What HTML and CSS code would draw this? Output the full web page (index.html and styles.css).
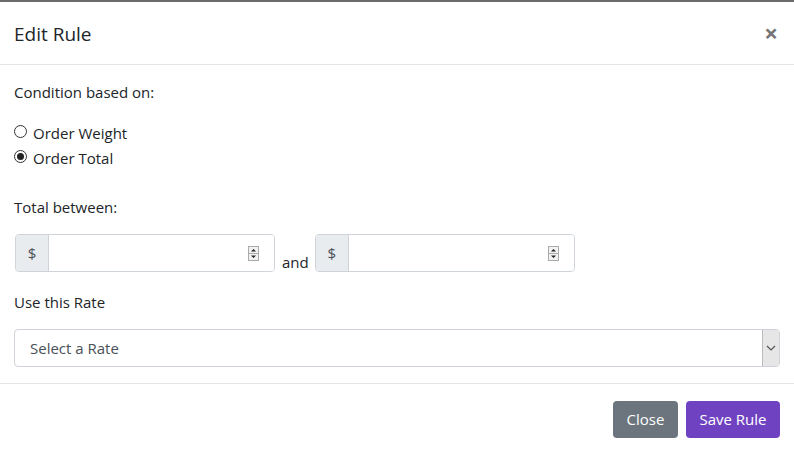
FILE: index.html
```html
<!DOCTYPE html>
<html>
<head>
<meta charset="utf-8">
<link rel="stylesheet" href="styles.css">
</head>
<body>
<div class="modal">
  <div class="modal-header">
    <h5 class="modal-title">Edit Rule</h5>
    <span class="close">&times;</span>
  </div>
  <div class="modal-body">
    <div class="label first">Condition based on:</div>
    <div class="radios">
      <label class="radio"><span class="dot"></span>Order Weight</label>
      <label class="radio"><span class="dot checked"></span>Order Total</label>
    </div>
    <div class="label">Total between:</div>
    <div class="range">
      <div class="input-group">
        <span class="addon">$</span>
        <div class="field"><span class="spin"><svg width="11" height="15" viewBox="0 0 11 15"><rect x="0.5" y="0.5" width="10" height="14" fill="#f2f2f2" stroke="#aaa"/><line x1="1" y1="7.5" x2="10" y2="7.5" stroke="#aaa"/><path d="M3 5.5h5L5.5 3z" fill="#222"/><path d="M3 9.5h5L5.5 12z" fill="#222"/></svg></span></div>
      </div>
      <span class="and">and</span>
      <div class="input-group">
        <span class="addon">$</span>
        <div class="field"><span class="spin"><svg width="11" height="15" viewBox="0 0 11 15"><rect x="0.5" y="0.5" width="10" height="14" fill="#f2f2f2" stroke="#aaa"/><line x1="1" y1="7.5" x2="10" y2="7.5" stroke="#aaa"/><path d="M3 5.5h5L5.5 3z" fill="#222"/><path d="M3 9.5h5L5.5 12z" fill="#222"/></svg></span></div>
      </div>
    </div>
    <div class="label rate">Use this Rate</div>
    <div class="select">
      <span class="select-text">Select a Rate</span>
      <span class="select-btn"><svg width="10" height="6" viewBox="0 0 10 6"><path d="M1 1l4 4 4-4" fill="none" stroke="#555" stroke-width="1.2"/></svg></span>
    </div>
  </div>
  <div class="modal-footer">
    <button class="btn btn-secondary">Close</button>
    <button class="btn btn-primary">Save Rule</button>
  </div>
</div>
</body>
</html>
```
FILE: styles.css
```css
* { box-sizing: border-box; }
html, body { margin: 0; padding: 0; background: #fff; }
body {
  font-family: "Open Sans", "Noto Sans", sans-serif;
  font-size: 15px;
  color: #212529;
  width: 794px;
  height: 453px;
  overflow: hidden;
}
.modal {
  border-top: 2px solid #6b6b6b;
  background: #fff;
}
.modal-header {
  display: flex;
  align-items: center;
  justify-content: space-between;
  height: 63px;
  padding: 0 15px 0 14px;
  border-bottom: 1px solid #e3e5e8;
}
.modal-title {
  margin: 0;
  font-size: 19px;
  font-weight: 400;
  line-height: 30px;
  padding-top: 2px;
}
.close {
  font-size: 24px;
  font-weight: 700;
  color: #757575;
  line-height: 1;
  margin-top: 0;
  margin-right: 1px;
}
.modal-body {
  padding: 15px 14px 16px 14px;
}
.label {
  line-height: 24px;
  margin-top: 25px;
}
.label.first { margin-top: 0; }
.label.rate { margin-top: 18px; }
.radios {
  margin-top: 17px;
  display: flex;
  flex-direction: column;
  gap: 1px;
}
.radio {
  display: flex;
  align-items: center;
  line-height: 24px;
  padding-left: 0;
}
.dot {
  width: 13px;
  height: 13px;
  border: 1px solid #333;
  border-radius: 50%;
  margin-right: 6px;
  margin-top: -3px;
  display: inline-flex;
  align-items: center;
  justify-content: center;
  background: #fff;
}
.dot.checked::after {
  content: "";
  width: 7px;
  height: 7px;
  border-radius: 50%;
  background: #222;
}
.range {
  display: flex;
  align-items: flex-end;
  margin-top: 15px;
  padding-left: 1px;
}
.input-group {
  display: flex;
  width: 260px;
  height: 38px;
  border: 1px solid #ced4da;
  border-radius: 4px;
  overflow: hidden;
}
.addon {
  width: 33px;
  background: #e9ecef;
  border-right: 1px solid #ced4da;
  display: flex;
  align-items: center;
  justify-content: center;
  color: #495057;
}
.field {
  flex: 1;
  background: #fff;
  display: flex;
  align-items: center;
  justify-content: flex-end;
  padding-right: 15px;
}
.spin { display: flex; }
.and {
  margin: 0 6px 0 7px;
  line-height: 20px;
}
.select {
  margin-top: 15px;
  height: 38px;
  border: 1px solid #ced4da;
  border-radius: 4px;
  display: flex;
  align-items: stretch;
  justify-content: space-between;
  overflow: hidden;
}
.select-text {
  padding-left: 15px;
  display: flex;
  align-items: center;
  color: #495057;
}
.select-btn {
  width: 17px;
  background: #e6e6e6;
  border-left: 1px solid #bbb;
  display: flex;
  align-items: center;
  justify-content: center;
}
.modal-footer {
  border-top: 1px solid #e3e5e8;
  display: flex;
  justify-content: flex-end;
  gap: 8px;
  padding: 17px 14px 0 0;
}
.btn {
  font-family: inherit;
  font-size: 15px;
  border: none;
  border-radius: 4px;
  color: #fff;
  height: 37px;
  padding: 0 13px;
  line-height: 37px;
}
.btn-secondary { background: #6c757d; width: 65px; }
.btn-primary { background: #6f42c1; width: 94px; }
```
